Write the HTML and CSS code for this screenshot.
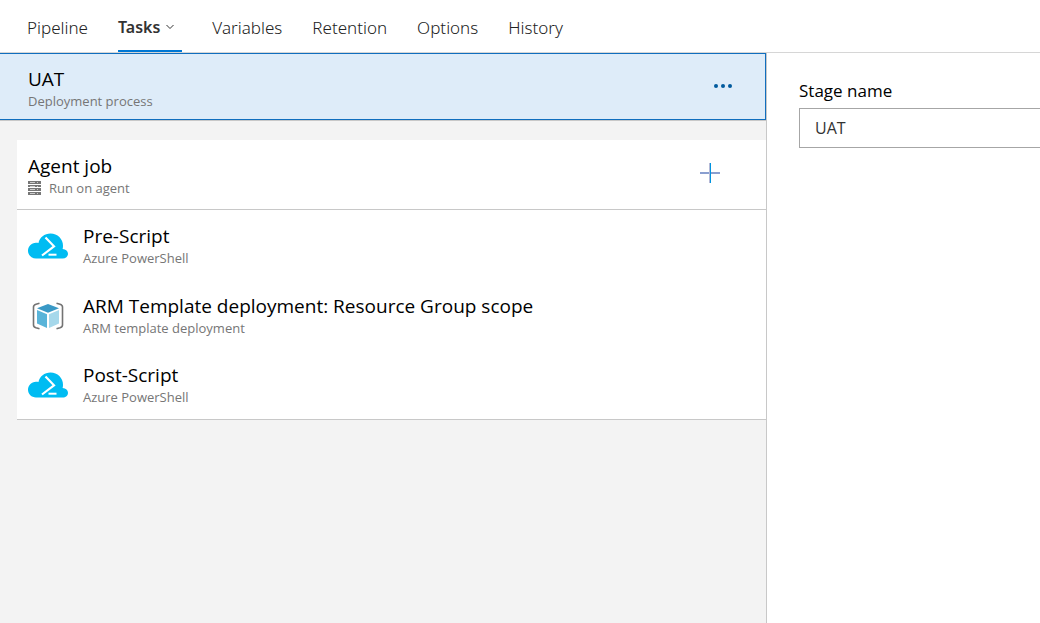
FILE: index.html
```html
<!DOCTYPE html>
<html lang="en">
<head>
  <meta charset="UTF-8">
  <title>Release pipeline - Tasks</title>
  <link rel="stylesheet" href="styles.css">
</head>
<body>

  <!-- Shared icons -->
  <svg class="icon-defs" aria-hidden="true">
    <symbol id="powershell" viewBox="0 0 40 26">
      <path fill="#00bcf2" d="M8 25.500C3.500 25.500 0 22.200 0 17.800S3.300 10 8 9.700c1 0 1.800.1 2.500.4C11.500 4.500 16.500.5 22.500.5c7 0 12.500 5.500 12.500 12.300 0 1.100-.1 2.200-.4 3.200 3.300.3 5.400 2.200 5.400 4.700 0 2.700-2.200 4.800-5.300 4.800z"/>
      <path fill="none" stroke="#fff" stroke-width="2.200" d="M17.500 4.500 26 13.300 14 22.500"/>
      <path stroke="#fff" stroke-width="2" d="M20.500 21.700h8"/>
    </symbol>
  </svg>

  <nav class="tabs">
    <a class="tab" href="#">Pipeline</a>
    <a class="tab active" href="#">Tasks
      <svg class="chevron" viewBox="0 0 8 6"><path d="M.5 1 4 4.500 7.500 1"/></svg>
    </a>
    <a class="tab" href="#">Variables</a>
    <a class="tab" href="#">Retention</a>
    <a class="tab" href="#">Options</a>
    <a class="tab" href="#">History</a>
  </nav>

  <main class="content">
    <section class="tasks-pane">

      <div class="process">
        <div class="text">
          <div class="title">UAT</div>
          <div class="subtitle">Deployment process</div>
        </div>
        <button class="icon-button" type="button" aria-label="More actions">
          <svg width="18" height="4" viewBox="0 0 18 4" fill="#005a9e"><circle cx="2" cy="2" r="2"/><circle cx="9" cy="2" r="2"/><circle cx="16" cy="2" r="2"/></svg>
        </button>
      </div>

      <div class="job">
        <div class="job-header">
          <div class="text">
            <div class="title">Agent job</div>
            <div class="subtitle">
              <svg class="server" viewBox="0 0 13 14">
                <path fill="#767676" d="M0 0h13v3H0zM0 4h13v2H0zM0 7h13v3H0zM0 11h13v3H0z"/>
                <path stroke="#ccc" d="M2 1.500h5M9 1.500h1M2 5.500h5M9 5.500h1M2 8.500h5M9 8.500h1M2 12.500h5M9 12.500h1"/>
              </svg>
              Run on agent
            </div>
          </div>
          <button class="icon-button" type="button" aria-label="Add a task">
            <svg width="20" height="20" viewBox="0 0 20 20"><path d="M0 10h20" stroke="#8a9fd0" stroke-width="2"/><path d="M9.500 0v20" stroke="#b5b9d6"/><path d="M10.500 0v20" stroke="#0094e0"/></svg>
          </button>
        </div>

        <div class="task">
          <svg class="task-icon" viewBox="0 0 40 26"><use href="#powershell"/></svg>
          <div class="text">
            <div class="title">Pre-Script</div>
            <div class="subtitle">Azure PowerShell</div>
          </div>
        </div>

        <div class="task">
          <svg class="task-icon" viewBox="0 0 40 28">
            <path fill="none" stroke="#737373" stroke-width="1.600" d="M11.500 1.200 8 2.200Q5.500 3 5.500 5v18q0 2 2.500 2.800l3.500 1M28.500 1.200l3.500 1q2.500.8 2.500 2.800v18q0 2-2.500 2.800l-3.500 1"/>
            <path fill="#3999c6" d="M20 2 31 6.200 20 10.800 9 6.200z"/>
            <path fill="#59b4d9" d="M9 8l10 4.200V26L9 21.500z"/>
            <path fill="#a6d8eb" d="M31 8l-10 4.200V26l10-4.500z"/>
          </svg>
          <div class="text">
            <div class="title">ARM Template deployment: Resource Group scope</div>
            <div class="subtitle">ARM template deployment</div>
          </div>
        </div>

        <div class="task">
          <svg class="task-icon" viewBox="0 0 40 26"><use href="#powershell"/></svg>
          <div class="text">
            <div class="title">Post-Script</div>
            <div class="subtitle">Azure PowerShell</div>
          </div>
        </div>
      </div>

    </section>

    <section class="details-pane">
      <label for="stageName">Stage name</label>
      <input type="text" id="stageName" value="UAT">
    </section>
  </main>

</body>
</html>
```
FILE: styles.css
```css
* { box-sizing: border-box; }
body { margin: 0; min-height: 100vh; display: flex; flex-direction: column; font-family: "Open Sans", "Noto Sans", sans-serif; font-size: 17px; color: #000; background: #fff; }
svg { display: block; flex: none; }
.icon-defs { position: absolute; width: 0; height: 0; }

/* Tabs */
.tabs { display: flex; gap: 30px; height: 53px; padding: 0 27px; border-bottom: 1px solid #d6d6d6; }
.tab { display: flex; align-items: center; gap: 6px; padding-top: 4px; border-bottom: 2px solid transparent; color: #222; font-family: "Noto Sans", "Open Sans", sans-serif; font-weight: 300; text-decoration: none; white-space: nowrap; }
.tab.active { padding-right: 8px; border-bottom-color: #0078d4; font-size: 16px; font-weight: 600; color: #333; }
.chevron { width: 8px; height: 6px; fill: none; stroke: #333; }

.content { flex: 1; display: flex; }

/* Task list */
.tasks-pane { width: 73.75%; background: #f3f3f3; border-right: 1px solid #c8c8c8; }
.process { display: flex; height: 67px; padding: 13px 23px 0 28px; border: 1px solid #106ebe; border-left: 0; background: #deecf9; box-shadow: 0 1px #c8c8c8; }
.job { margin: 20px 0 0 17px; background: #fff; border-bottom: 1px solid #c8c8c8; }
.job-header { display: flex; height: 70px; padding: 14px 37px 0 11px; border-bottom: 1px solid #c8c8c8; }
.task { display: flex; align-items: center; gap: 15px; height: 70px; padding: 2px 11px 0; }
.task:last-child { height: 69px; padding-top: 1px; }
.task-icon { width: 40px; height: 28px; }
.text { flex: 1; min-width: 0; }
.title { font-size: 19px; line-height: 24px; }
.subtitle { display: flex; align-items: center; gap: 8px; font-size: 13px; line-height: 20px; color: #767676; }
.server { width: 13px; height: 14px; }
.icon-button { display: flex; align-items: center; justify-content: center; width: 38px; height: 38px; padding: 0; border: 0; background: none; cursor: pointer; }

/* Stage details */
.details-pane { flex: 1; display: flex; flex-direction: column; padding: 26px 0 0 32px; overflow: hidden; }
.details-pane label { line-height: 24px; }
.details-pane input { width: 100%; height: 40px; margin-top: 5px; padding: 0 15px; border: 1px solid #a6a6a6; border-right: 0; font: inherit; font-size: 16px; color: #333; background: #fff; }
```
